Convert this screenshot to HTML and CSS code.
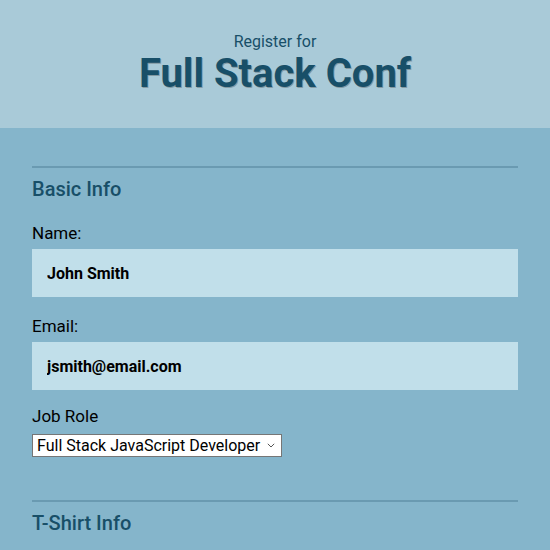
FILE: index.html
```html
<!DOCTYPE html>
<html lang="en">
<head>
<meta charset="utf-8">
<title>Full Stack Conf</title>
<link rel="stylesheet" href="styles.css">
</head>
<body>
<header class="site-header">
  <span class="pre-title">Register for</span>
  <h1 class="title">Full Stack Conf</h1>
</header>
<main class="form">
  <section class="fieldset">
    <h2 class="legend">Basic Info</h2>
    <label class="label" for="name">Name:</label>
    <input class="text-input input-name" id="name" type="text" value="John Smith">
    <label class="label" for="mail">Email:</label>
    <input class="text-input input-mail" id="mail" type="email" value="jsmith@email.com">
    <label class="label label-job" for="title">Job Role</label>
    <span class="select-wrap">
      <select class="select" id="title">
        <option>Full Stack JavaScript Developer</option>
      </select>
      <svg class="chevron" width="8" height="5" viewBox="0 0 8 5" aria-hidden="true"><path d="M0.8 0.8 L4 4 L7.2 0.8" fill="none" stroke="#555" stroke-width="1"/></svg>
    </span>
  </section>
  <section class="fieldset">
    <h2 class="legend">T-Shirt Info</h2>
  </section>
</main>
</body>
</html>
```
FILE: styles.css
```css
* { box-sizing: border-box; }
html, body { margin: 0; padding: 0; }
body {
  background: #85b5cb;
  font-family: Roboto, "Open Sans", sans-serif;
  color: #000;
  width: 550px;
  height: 550px;
  overflow: hidden;
}
.site-header {
  background: #a9cad8;
  height: 128px;
  padding-top: 32px;
  text-align: center;
  color: #184f68;
}
.pre-title {
  display: block;
  font-size: 16px;
  line-height: 20px;
}
.title {
  margin: 2px 0 0;
  font-size: 40px;
  line-height: 40px;
  font-weight: 700;
  text-shadow: 1px 1px 0 rgba(60, 60, 60, 0.35);
}
.form {
  padding: 38px 32px 0;
}
.fieldset {
  border-top: 2px solid #6a9ab1;
  padding-top: 9px;
  display: flex;
  flex-direction: column;
  align-items: flex-start;
}
.fieldset + .fieldset { margin-top: 43px; }
.legend {
  margin: 0 0 22px;
  font-size: 20px;
  line-height: 24px;
  font-weight: 500;
  color: #184f68;
}
.label {
  font-size: 17px;
  line-height: 20px;
  margin-bottom: 6px;
}
.text-input {
  width: 100%;
  height: 48px;
  border: 0;
  padding: 0 15px;
  background: #c1dfea;
  font-family: Roboto, sans-serif;
  font-size: 16px;
  font-weight: 700;
  color: #000;
  outline: none;
}
.input-name { margin: 0 0 19px; }
.input-mail { margin: 0 0 16px; }
.label-job { margin-bottom: 8px; }
.select-wrap {
  position: relative;
  display: block;
  width: 250px;
  height: 23px;
}
.select {
  appearance: none;
  -webkit-appearance: none;
  display: block;
  width: 250px;
  height: 23px;
  font-family: Roboto, sans-serif;
  font-size: 16px;
  line-height: 21px;
  background: #fff;
  border: 1px solid #767676;
  border-radius: 0;
  color: #000;
  padding: 0 0 0 4px;
}
.chevron {
  position: absolute;
  right: 7px;
  top: 9px;
  pointer-events: none;
}
```
